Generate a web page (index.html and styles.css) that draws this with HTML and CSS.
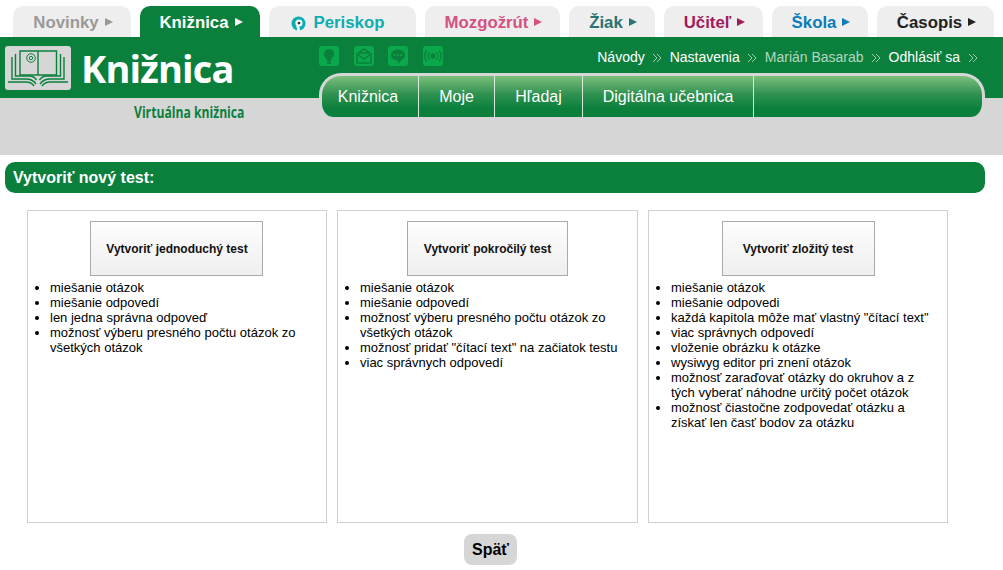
FILE: index.html
```html
<!DOCTYPE html>
<html lang="sk">
<head>
<meta charset="utf-8">
<title>Knižnica</title>
<link rel="stylesheet" href="styles.css">
</head>
<body>
<nav class="tabs">
  <a class="tab t-novinky">Novinky<span class="arr"></span></a>
  <a class="tab t-kniznica">Knižnica<span class="arr"></span></a>
  <a class="tab t-periskop"><svg class="peri" viewBox="0 0 16 16" width="15" height="15"><circle cx="8" cy="8" r="7.5" fill="#0aaeb0"/><circle cx="8.500" cy="7.500" r="3.800" fill="#fff"/><circle cx="8.500" cy="7.500" r="1.500" fill="#333"/><path d="M5.500 10l1.500 6h2.500l-.5-5z" fill="#fff"/></svg>Periskop</a>
  <a class="tab t-mozgozrut">Mozgožrút<span class="arr"></span></a>
  <a class="tab t-ziak">Žiak<span class="arr"></span></a>
  <a class="tab t-ucitel">Učiteľ<span class="arr"></span></a>
  <a class="tab t-skola">Škola<span class="arr"></span></a>
  <a class="tab t-casopis">Časopis<span class="arr"></span></a>
</nav>
<header class="header">
  <div class="brand">
    <div class="logo-row">
      <div class="logo-box">
        <svg viewBox="0 0 66 44" width="66" height="44" fill="none" stroke="#0a803c" stroke-width="1.400">
          <path d="M7 11v22h14c5 0 8 2 10 5M10.500 8v22h14c3 0 5 1 7 4"/>
          <path d="M59 11v22H45c-5 0-8 2-10 5M55.500 8v22h-14c-3 0-5 1-7 4"/>
          <path d="M15 5h18v24H15zM33 5h18.500v24H33"/>
          <path d="M3 36h18c4 0 6 1 8 4M63 36H45c-4 0-6 1-8 4" />
          <circle cx="26" cy="12" r="4.300" stroke-width="1"/><circle cx="26" cy="12" r="1.700" stroke-width="1"/>
        </svg>
      </div>
      <div class="logo-text">Knižnica</div>
    </div>
    <div class="subtitle">Virtuálna knižnica</div>
  </div>
  <div class="head-right">
    <div class="util-row">
      <div class="icons">
        <span class="ico"><svg viewBox="0 0 20 20" width="20" height="20" fill="#0a803c"><path d="M10 3a5 5 0 0 0-3 9l1 3h4l1-3a5 5 0 0 0-3-9z"/><rect x="8" y="15.500" width="4" height="2.500" rx="1"/></svg></span>
        <span class="ico"><svg viewBox="0 0 20 20" width="20" height="20" fill="none" stroke="#0a803c" stroke-width="1.500"><path d="M3 8l7-5 7 5v9H3zM3 8l7 5 7-5M5.500 7h9"/></svg></span>
        <span class="ico"><svg viewBox="0 0 20 20" width="20" height="20"><path fill="#0a803c" d="M10 3.500c-4 0-7 2.500-7 5.500s3 5.500 7 5.500v3.500l3.500-4c2-1 3.500-3 3.500-5 0-3-3-5.500-7-5.500z"/><circle cx="6.800" cy="9" r="1" fill="#0aa84a"/><circle cx="10" cy="9" r="1" fill="#0aa84a"/><circle cx="13.200" cy="9" r="1" fill="#0aa84a"/></svg></span>
        <span class="ico"><svg viewBox="0 0 20 20" width="20" height="20" fill="none" stroke="#0a803c" stroke-width="1.300"><circle cx="10" cy="10" r="2" fill="#0a803c"/><path d="M6.500 6.500a5 5 0 0 0 0 7M13.500 6.500a5 5 0 0 1 0 7M4 4.500a8 8 0 0 0 0 11M16 4.500a8 8 0 0 1 0 11"/></svg></span>
      </div>
      <div class="links">
        <a>Návody</a><svg class="sep" viewBox="0 0 10 10" width="10" height="10"><path d="M1 1l4 4-4 4M5 1l4 4-4 4"/></svg><a>Nastavenia</a><svg class="sep" viewBox="0 0 10 10" width="10" height="10"><path d="M1 1l4 4-4 4M5 1l4 4-4 4"/></svg><a class="muted">Marián Basarab</a><svg class="sep" viewBox="0 0 10 10" width="10" height="10"><path d="M1 1l4 4-4 4M5 1l4 4-4 4"/></svg><a>Odhlásiť sa</a><svg class="sep" viewBox="0 0 10 10" width="10" height="10"><path d="M1 1l4 4-4 4M5 1l4 4-4 4"/></svg>
      </div>
    </div>
    <nav class="menu">
      <a class="m1">Knižnica</a>
      <a class="m2">Moje</a>
      <a class="m3">Hľadaj</a>
      <a class="m4">Digitálna učebnica</a>
    </nav>
  </div>
</header>
<h1 class="title">Vytvoriť nový test:</h1>
<main class="cards">
  <section class="card">
    <div class="btn-wrap"><button class="create w1">Vytvoriť jednoduchý test</button></div>
    <ul>
      <li>miešanie otázok</li>
      <li>miešanie odpovedí</li>
      <li>len jedna správna odpoveď</li>
      <li>možnosť výberu presného počtu otázok zo všetkých otázok</li>
    </ul>
  </section>
  <section class="card">
    <div class="btn-wrap"><button class="create w2">Vytvoriť pokročilý test</button></div>
    <ul>
      <li>miešanie otázok</li>
      <li>miešanie odpovedí</li>
      <li>možnosť výberu presného počtu otázok zo všetkých otázok</li>
      <li>možnosť pridať "čítací text" na začiatok testu</li>
      <li>viac správnych odpovedí</li>
    </ul>
  </section>
  <section class="card">
    <div class="btn-wrap"><button class="create w3">Vytvoriť zložitý test</button></div>
    <ul>
      <li>miešanie otázok</li>
      <li>miešanie odpovedi</li>
      <li>každá kapitola môže mať vlastný "čítací text"</li>
      <li>viac správnych odpovedí</li>
      <li>vloženie obrázku k otázke</li>
      <li>wysiwyg editor pri znení otázok</li>
      <li>možnosť zaraďovať otázky do okruhov a z tých vyberať náhodne určitý počet otázok</li>
      <li>možnosť čiastočne zodpovedať otázku a získať len časť bodov za otázku</li>
    </ul>
  </section>
</main>
<div class="back-row"><button class="back">Späť</button></div>
</body>
</html>
```
FILE: styles.css
```css
* { box-sizing: border-box; }
html, body { margin: 0; padding: 0; }
body { background: #fff; font-family: "Liberation Sans", Arial, sans-serif; color: #000; height: 570px; overflow: hidden; }

.tabs { display: flex; gap: 9px; padding: 6px 0 0 13px; height: 37px; }
.tab { height: 31px; background: #eee; border-radius: 10px 10px 0 0; padding-left: 2px; font-size: 16.800px; font-weight: 700; line-height: 33px; text-align: center; white-space: nowrap; }
.arr { display: inline-block; width: 0; height: 0; margin-left: 6px; vertical-align: 2px; border-left: 8px solid currentColor; border-top: 4.500px solid transparent; border-bottom: 4.500px solid transparent; }
.peri { vertical-align: -3px; margin-right: 8px; }
.t-novinky { width: 118px; color: #999; }
.t-kniznica { width: 120px; background: #0a803c; color: #fff; }
.t-periskop { width: 147px; color: #0aaeb0; padding-right: 12px; }
.t-mozgozrut { width: 135px; color: #d4527f; }
.t-ziak { width: 86px; color: #2c7373; }
.t-ucitel { width: 99px; color: #a3195b; }
.t-skola { width: 96px; color: #0a7cb8; }
.t-casopis { width: 117px; color: #222; }

.header { display: flex; height: 118px; background: linear-gradient(#0a803c 61px, #d6d6d6 61px); }
.brand { width: 319px; padding: 9px 0 0 5px; }
.logo-row { display: flex; align-items: center; gap: 10px; height: 44px; }
.logo-box { width: 66px; height: 44px; background: #d6d6d6; border-radius: 3px; }
.logo-box svg { display: block; }
.logo-text { font-family: "Open Sans", sans-serif; font-weight: 700; font-size: 38px; line-height: 42px; color: #fff; letter-spacing: -.85px; }
.subtitle { margin: 12px 0 0 129px; font-family: "Open Sans", sans-serif; font-weight: 700; font-size: 16px; line-height: 20px; color: #0a803c; white-space: nowrap; transform: scaleX(.76); transform-origin: left; }

.head-right { width: 666px; display: flex; flex-direction: column; }
.util-row { display: flex; justify-content: space-between; height: 36px; padding-top: 9px; }
.icons { display: flex; gap: 14.700px; }
.ico { width: 20px; height: 20px; background: #0aa84a; border-radius: 3px; display: block; }
.ico svg { display: block; }
.links { font-size: 14px; line-height: 22px; color: #fff; white-space: nowrap; }
.links .muted { color: #b5d5c0; }
.sep { margin: 0 7.500px; fill: none; stroke: #c8e0d0; stroke-width: .8; vertical-align: -1px; }

.menu { display: flex; height: 44px; border: solid #d6d6d6; border-width: 3px 3px 0 3px; border-radius: 22px 22px 14px 14px; background: linear-gradient(#7dbf7c, #2f9150 45%, #0a803c 80%); overflow: hidden; }
.menu a { color: #fff; font-size: 16px; line-height: 41px; text-align: center; border-right: 1px solid #d8e8dc; height: 41px; }
.m1 { width: 97px; padding-right: 4px; }
.m2 { width: 76px; }
.m3 { width: 88px; }
.m4 { width: 171px; }

.title { margin: 7px 0 0 5px; width: 980px; height: 31px; background: #0a803c; color: #fff; border-radius: 10px; font-size: 16px; font-weight: 700; line-height: 32px; padding-left: 8px; }

.cards { display: flex; gap: 10px; margin: 17px 0 0 27px; }
.card { width: 300px; height: 313px; border: 1px solid #d0d0d0; padding-top: 10px; }
.card:nth-child(2) { width: 301px; }
.btn-wrap { text-align: center; height: 55px; }
.create { height: 55px; background: linear-gradient(#fdfdfd, #efefef); border: 1px solid #aaa; font-family: "Liberation Sans", Arial, sans-serif; font-size: 12px; font-weight: 700; color: #111; padding: 0; }
.w1 { width: 173px; margin-right: 1px; padding-left: 1px; }
.w2 { width: 161px; }
.w3 { width: 153px; }
.card ul { margin: 4px 0 0; padding: 0 15px 0 22px; font-size: 13px; line-height: 15px; }

.back-row { width: 981px; text-align: center; margin-top: 11px; }
.back { width: 53px; height: 31px; background: #d6d6d6; border: 0; border-radius: 8px; font-family: "Liberation Sans", Arial, sans-serif; font-size: 16px; font-weight: 700; color: #000; padding: 0; }
```
